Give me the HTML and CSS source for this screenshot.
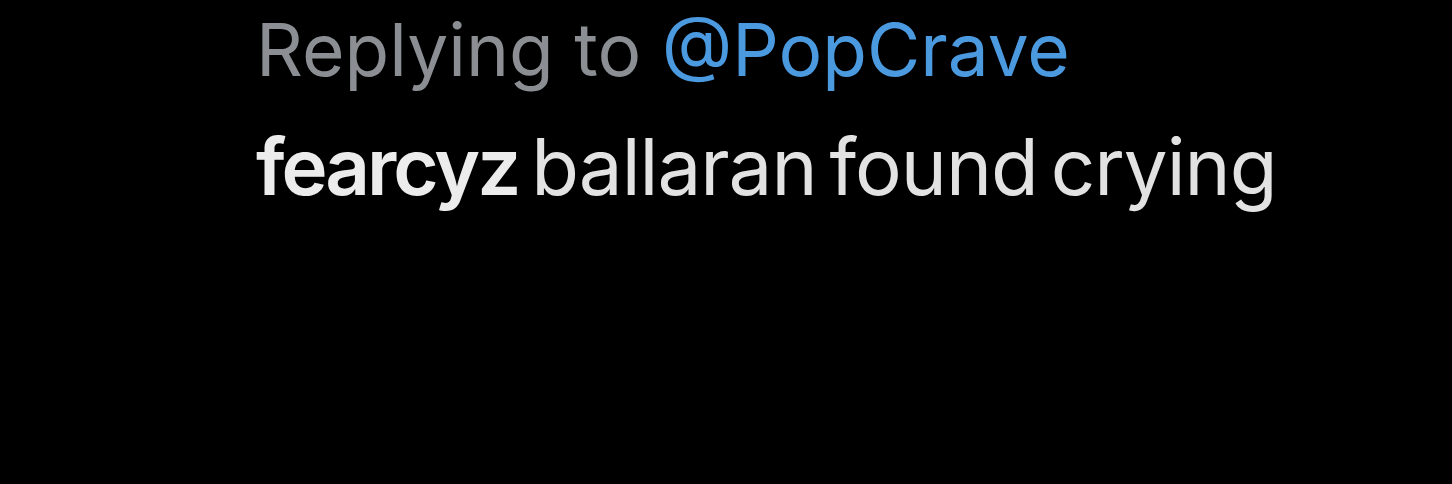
FILE: index.html
```html
<!DOCTYPE html>
<html>
<head>
<meta charset="utf-8">
<link rel="stylesheet" href="styles.css">
</head>
<body>
<main class="reply">
  <p class="replying">Replying to <span class="handle">@PopCrave</span></p>
  <p class="tweet"><span class="user">fearcyz</span> ballaran found crying</p>
</main>
</body>
</html>
```
FILE: styles.css
```css
html, body {
  margin: 0;
  padding: 0;
  background: #000;
  height: 100%;
}
.reply {
  display: flex;
  flex-direction: column;
  padding: 6px 0 0 256px;
  font-family: Inter, "Noto Sans", sans-serif;
}
.replying {
  margin: 0;
  font-size: 73px;
  line-height: 88px;
  color: #8b8e92;
  letter-spacing: 0;
}
.handle {
  color: #4b9ae0;
}
.tweet {
  margin: 25px 0 0;
  font-size: 78px;
  line-height: 96px;
  color: #e2e2e2;
  letter-spacing: -1px;
  word-spacing: -8px;
}
.user {
  font-weight: 600;
  color: #ececec;
  letter-spacing: -3px;
}
```
